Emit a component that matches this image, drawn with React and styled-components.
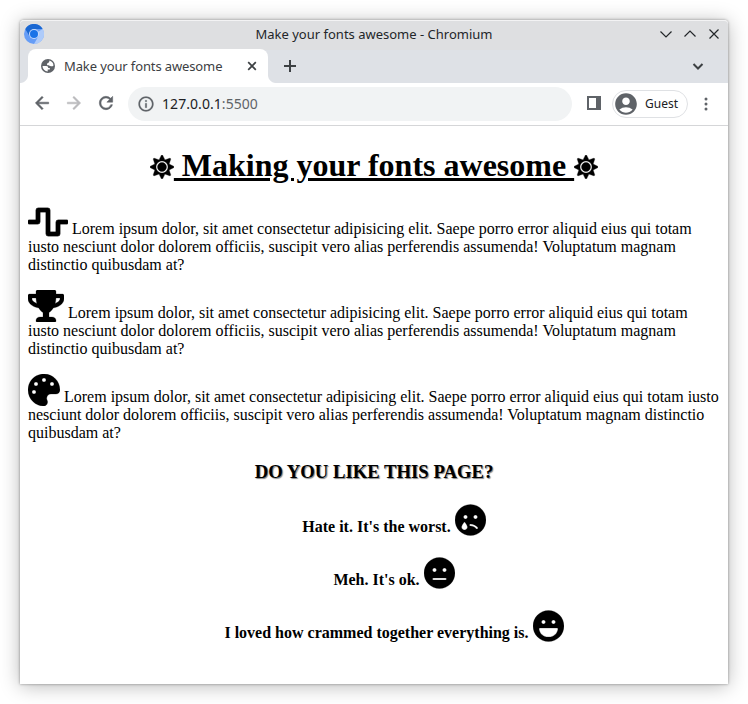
import React from "react";
import styled, { createGlobalStyle } from "styled-components";
import { FaSun, FaWaveSquare, FaTrophy, FaPalette, FaSadTear, FaMeh, FaLaugh } from "react-icons/fa";
import { MdArrowBack, MdArrowForward, MdRefresh, MdInfoOutline, MdAccountCircle } from "react-icons/md";

const Global = createGlobalStyle`
  *, *::before, *::after { box-sizing: border-box; }
  html, body { margin: 0; background: #fff; }
  body { height: 704px; overflow: hidden; padding: 20px; }
`;

const Window = styled.div`
  width: 708px;
  height: 664px;
  display: flex;
  flex-direction: column;
  background: #fff;
  border-radius: 4px 4px 0 0;
  box-shadow: 0 0 3px rgba(0, 0, 0, 0.4), 0 2px 20px rgba(0, 0, 0, 0.28);
  font-family: "Noto Sans", sans-serif;
`;

const TitleBar = styled.header`
  height: 30px;
  flex: none;
  display: grid;
  grid-template-columns: 80px 1fr 80px;
  align-items: center;
  padding: 0 4px 2px;
  background: #dedfe1;
  border-top: 1px solid #f3f3f4;
  border-radius: 4px 4px 0 0;
`;

const Logo = styled.svg`
  display: block;
  margin-bottom: 1px;
`;

const Title = styled.div`
  text-align: center;
  font-size: 13px;
  line-height: 18px;
  color: #232629;
  padding-bottom: 1px;
`;

const WindowControls = styled.div`
  display: flex;
  justify-content: flex-end;
  gap: 4px;
  padding-bottom: 1px;
`;

const Glyph = styled.svg`
  display: block;
  flex: none;
  fill: none;
  stroke: ${(p) => p.$color || "#3c4043"};
  stroke-width: ${(p) => p.$weight || 1.2};
`;

const TabStrip = styled.nav`
  height: 33px;
  flex: none;
  display: flex;
  align-items: center;
  padding: 0 22px 0 8px;
  background: #dee1e6;
  > svg { margin-bottom: 2px; }
`;

const Tab = styled.div`
  position: relative;
  width: 240px;
  height: 34px;
  margin-top: -1px;
  display: flex;
  align-items: center;
  padding: 0 10px 0 12px;
  background: #fff;
  border-radius: 8px 8px 0 0;
  font-size: 13px;
  letter-spacing: -0.12px;
  color: #3c4043;

  &::before,
  &::after {
    content: "";
    position: absolute;
    bottom: 0;
    width: 8px;
    height: 8px;
  }
  &::before {
    left: -8px;
    background: radial-gradient(circle at 0 0, transparent 7.5px, #fff 8.5px);
  }
  &::after {
    right: -8px;
    background: radial-gradient(circle at 100% 0, transparent 7.5px, #fff 8.5px);
  }
`;

const TabTitle = styled.span`
  flex: 1;
  margin-left: 8px;
  line-height: 18px;
`;

const NewTab = styled.div`
  flex: 1;
  padding: 0 0 2px 15px;
`;

const Toolbar = styled.div`
  height: 43px;
  flex: none;
  display: flex;
  align-items: center;
  padding: 0 14px 0 12px;
  border-bottom: 1px solid #d5d6d8;
  color: #5f6368;
`;

const NavButton = styled.span`
  width: 20px;
  height: 20px;
  margin: 0 12px 2px 0;
  color: ${(p) => (p.$disabled ? "#bababd" : "#5f6368")};
  svg { display: block; }
  path:not([fill="none"]) { stroke: currentColor; stroke-width: 0.6px; }
`;

const AddressBar = styled.div`
  width: 444px;
  height: 34px;
  display: flex;
  align-items: center;
  gap: 7px;
  padding-left: 9px;
  border-radius: 17px;
  background: #f1f3f4;
  font-size: 14px;
  line-height: 20px;
  letter-spacing: 0.06px;
  path:not([fill="none"]) { stroke: currentColor; stroke-width: 0.3px; }
`;

const Host = styled.b`
  font-weight: 400;
  color: #202124;
`;

const SidePanel = styled.span`
  width: 14px;
  height: 14px;
  margin: 0 11px 2px 15px;
  border: 2px solid #5f6368;
  border-right-width: 5px;
`;

const Profile = styled.div`
  width: 76px;
  height: 28px;
  display: flex;
  align-items: center;
  gap: 6px;
  border: 1px solid #dfe1e4;
  border-radius: 14px;
  font-size: 12px;
  color: #202124;
  svg { color: #5f6368; flex: none; }
`;

const ProfileName = styled.span`
  padding-bottom: 2px;
`;

const Menu = styled.svg`
  display: block;
  margin: 0 -4px 1px 13px;
  flex: none;
  fill: #5f6368;
`;

const Page = styled.main`
  flex: 1;
  padding: 0 8px;
  overflow: hidden;
  color: #000;
  font-family: "Liberation Serif", serif;
  font-size: 16px;
  line-height: 18px;
`;

const Heading = styled.h1`
  margin: 21.44px 0;
  font-size: 32px;
  line-height: 37px;
  text-align: center;
  white-space: pre;
  svg { width: 24px; height: 24px; vertical-align: -3px; }
  path { stroke: currentColor; stroke-width: 8px; }
`;

const Underlined = styled.span`
  text-decoration: underline;
`;

const Icon = styled.span`
  svg {
    width: ${(p) => p.$width}px;
    height: 32px;
    vertical-align: -4px;
  }
  path { stroke: currentColor; stroke-width: ${(p) => p.$bold || 4}px; }
`;

const Paragraph = styled.p`
  margin: 0 0 16px;
`;

const Question = styled.h3`
  margin: 18.72px 0;
  font-size: 18.72px;
  line-height: 22px;
  text-align: center;
  text-transform: uppercase;
  text-shadow: 1px 1px 1px #808080;
`;

const Answers = styled.ul`
  margin: 21.28px 0 0;
  padding: 0 0 0 40px;
  list-style: none;
`;

const Answer = styled.li`
  margin-bottom: 21px;
  font-weight: 700;
  text-align: center;
`;

const LOREM =
  "Lorem ipsum dolor, sit amet consectetur adipisicing elit. Saepe porro error aliquid eius qui totam iusto nesciunt dolor dolorem officiis, suscipit vero alias perferendis assumenda! Voluptatum magnam distinctio quibusdam at?";

const PARAGRAPHS = [
  { Art: FaWaveSquare, width: 40, bold: 12 },
  { Art: FaTrophy, width: 36 },
  { Art: FaPalette, width: 32 },
];

const ANSWERS = [
  { text: "Hate it. It's the worst.", Art: FaSadTear },
  { text: "Meh. It's ok.", Art: FaMeh },
  { text: "I loved how crammed together everything is.", Art: FaLaugh },
];

function ChromiumLogo() {
  return (
    <Logo width="20" height="20" viewBox="0 0 20 20">
      <circle cx="10" cy="10" r="10" fill="#669df6" />
      <path d="M10 10 18.7 5A10 10 0 0 1 10 20L14.3 12.5Z" fill="#aecbfa" />
      <path d="M1.3 5A10 10 0 0 1 18.7 5H10L5.7 12.5Z" fill="#1967d2" />
      <circle cx="10" cy="10" r="5" fill="#c6dafc" />
      <circle cx="10" cy="10" r="4" fill="#1a73e8" />
    </Logo>
  );
}

function Globe() {
  return (
    <svg width="16" height="16" viewBox="0 0 16 16">
      <circle cx="8" cy="8" r="7" fill="#5f6368" />
      <path
        d="M9.3 2.6A5.6 5.6 0 0 1 13.5 7.5C12.6 8.5 11.2 8.6 10.3 7.9C9.6 7.3 8.2 7.7 7.3 6.9C6.5 6.1 7.2 5.2 8.1 4.9C9 4.6 9.5 3.8 9.3 2.6Z M2.5 8H6.2C7.6 8 8.3 8.9 8.2 10H9.8V11.6H7.7V13.5A5.6 5.6 0 0 1 2.5 8Z"
        fill="#fff"
      />
    </svg>
  );
}

export default function App() {
  return (
    <>
      <Global />
      <Window>
        <TitleBar>
          <ChromiumLogo />
          <Title>Make your fonts awesome - Chromium</Title>
          <WindowControls>
            <Glyph width="20" height="20" viewBox="0 0 20 20" $color="#232629"><path d="M4.5 7.5l5.5 5.5 5.5-5.5" /></Glyph>
            <Glyph width="20" height="20" viewBox="0 0 20 20" $color="#232629"><path d="M4.5 12.5l5.5-5.5 5.5 5.5" /></Glyph>
            <Glyph width="20" height="20" viewBox="0 0 20 20" $color="#232629"><path d="M5.5 5.5l9 9M14.5 5.5l-9 9" /></Glyph>
          </WindowControls>
        </TitleBar>
        <TabStrip>
          <Tab>
            <Globe />
            <TabTitle>Make your fonts awesome</TabTitle>
            <Glyph width="12" height="12" viewBox="0 0 12 12" $weight={1.7}><path d="M2.2 2.2l7.6 7.6M9.8 2.2l-7.6 7.6" /></Glyph>
          </Tab>
          <NewTab>
            <Glyph width="14" height="14" viewBox="0 0 14 14" $weight={2}><path d="M7 1v12M1 7h12" /></Glyph>
          </NewTab>
          <Glyph width="16" height="16" viewBox="0 0 16 16" $weight={2}><path d="M3.5 6l4.5 4.5 4.5-4.5" /></Glyph>
        </TabStrip>
        <Toolbar>
          <NavButton><MdArrowBack size={20} /></NavButton>
          <NavButton $disabled><MdArrowForward size={20} /></NavButton>
          <NavButton><MdRefresh size={20} /></NavButton>
          <AddressBar>
            <MdInfoOutline size={18} />
            <span><Host>127.0.0.1</Host>:5500</span>
          </AddressBar>
          <SidePanel />
          <Profile>
            <MdAccountCircle size={26} />
            <ProfileName>Guest</ProfileName>
          </Profile>
          <Menu width="10" height="16" viewBox="0 0 10 16">
            <circle cx="5" cy="3" r="1.5" />
            <circle cx="5" cy="8" r="1.5" />
            <circle cx="5" cy="13" r="1.5" />
          </Menu>
        </Toolbar>
        <Page>
          <Heading><FaSun /><Underlined> Making your fonts awesome </Underlined><FaSun /></Heading>
          {PARAGRAPHS.map(({ Art, width, bold }) => (
            <Paragraph key={width}>
              <Icon $width={width} $bold={bold}><Art /></Icon> {LOREM}
            </Paragraph>
          ))}
          <Question>Do you like this page?</Question>
          <Answers>
            {ANSWERS.map(({ text, Art }) => (
              <Answer key={text}>{text} <Icon $width={31}><Art /></Icon></Answer>
            ))}
          </Answers>
        </Page>
      </Window>
    </>
  );
}
